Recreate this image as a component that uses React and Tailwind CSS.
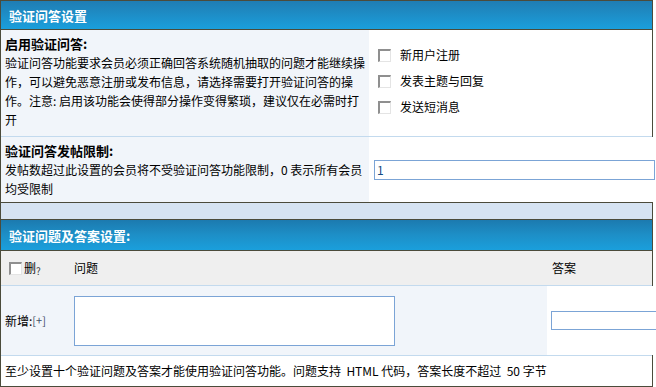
import React from "react";

const Box = () => (
  <span className="inline-block w-[13px] h-[13px] bg-white border-t-2 border-l-2 border-r border-b border-t-[#8f8f8f] border-l-[#8f8f8f] border-r-[#e4e4e4] border-b-[#e4e4e4] shrink-0" />
);

const font = { fontFamily: '"Noto Sans CJK SC", "Liberation Sans", sans-serif' };

export default function App() {
  return (
    <div className="w-[656px] h-[387px] bg-white overflow-hidden text-[12px] text-black" style={font}>
      <div className="w-[653px] border-x border-t border-[#4b4b3b]">
        {/* header 1 */}
        <div className="h-[29px] border-b border-[#4b4b3b] bg-linear-to-b from-[#1f7db3] to-[#1a9fdc] flex items-center pl-[8px]">
          <span className="text-white font-bold text-[13px] leading-none">验证问答设置</span>
        </div>
        {/* row 1 */}
        <div className="h-[107px] border-b border-[#c3daee] flex">
          <div className="w-[368px] shrink-0 bg-[#f1f5fa] px-[4px] pt-[4px] leading-[19px]">
            <div className="font-bold text-[13px]">启用验证问答:</div>
            <div>验证问答功能要求会员必须正确回答系统随机抽取的问题才能继续操作，可以避免恶意注册或发布信息，请选择需要打开验证问答的操作。注意: 启用该功能会使得部分操作变得繁琐，建议仅在必需时打开</div>
          </div>
          <div className="flex-1 bg-white pl-[9px] pt-[12px] flex flex-col">
            {["新用户注册", "发表主题与回复", "发送短消息"].map((t) => (
              <div key={t} className="h-[26px] flex items-center">
                <Box />
                <span className="ml-[9px]">{t}</span>
              </div>
            ))}
          </div>
        </div>
        {/* row 2 */}
        <div className="h-[66px] border-b border-[#4b4b3b] flex">
          <div className="w-[368px] shrink-0 bg-[#f1f5fa] px-[4px] pt-[4px] leading-[19px]">
            <div className="font-bold text-[13px]">验证问答发帖限制:</div>
            <div>发帖数超过此设置的会员将不受验证问答功能限制，0 表示所有会员均受限制</div>
          </div>
          <div className="flex-1 bg-white pl-[5px] flex items-center">
            <input
              defaultValue="1"
              className="w-[281px] h-[20px] shrink-0 border border-[#7ba4d6] bg-white px-[2px] text-[12px] text-[#134a82] outline-none"
              style={font}
            />
          </div>
        </div>
        {/* band */}
        <div className="h-[17px] border-b border-[#4b4b3b] bg-[#d6e3f2]" />
        {/* header 2 */}
        <div className="h-[31px] border-b border-[#4b4b3b] bg-linear-to-b from-[#1c7aaf] via-[#1d8fc7] to-[#1a9fdc] flex items-center pl-[8px]">
          <span className="text-white font-bold text-[13px] leading-none">验证问题及答案设置:</span>
        </div>
        {/* column header */}
        <div className="h-[35px] border-b border-[#c3daee] bg-[#efefef] flex items-center">
          <div className="w-[69px] shrink-0 pl-[8px] flex items-center">
            <Box />
            <span className="ml-[2px]">删</span>
            <span className="text-[10px] text-[#444] mt-[4px]">?</span>
          </div>
          <div className="w-[477px] shrink-0 pl-[4px]">问题</div>
          <div className="flex-1 pl-[5px]">答案</div>
        </div>
        {/* new row */}
        <div className="h-[70px] border-b border-[#c3daee] flex">
          <div className="w-[69px] shrink-0 bg-[#f1f5fa] pl-[4px] flex items-center">
            <span>新增</span>
            <span>:</span>
            <span className="text-[11px] text-[#3d4f66]">[+]</span>
          </div>
          <div className="w-[477px] shrink-0 bg-[#f1f5fa] pl-[4px] flex items-center">
            <textarea className="w-[321px] h-[50px] border border-[#7ba4d6] bg-white resize-none outline-none" />
          </div>
          <div className="flex-1 bg-white pl-[4px] flex items-center">
            <input className="w-[160px] h-[19px] shrink-0 border border-[#7ba4d6] bg-white outline-none" />
          </div>
        </div>
        {/* footer */}
        <div className="h-[31px] border-b border-[#4b4b3b] bg-white flex items-center pl-[4px]">
          至少设置十个验证问题及答案才能使用验证问答功能。问题支持 &nbsp;HTML 代码，答案长度不超过 &nbsp;50 字节
        </div>
      </div>
    </div>
  );
}
